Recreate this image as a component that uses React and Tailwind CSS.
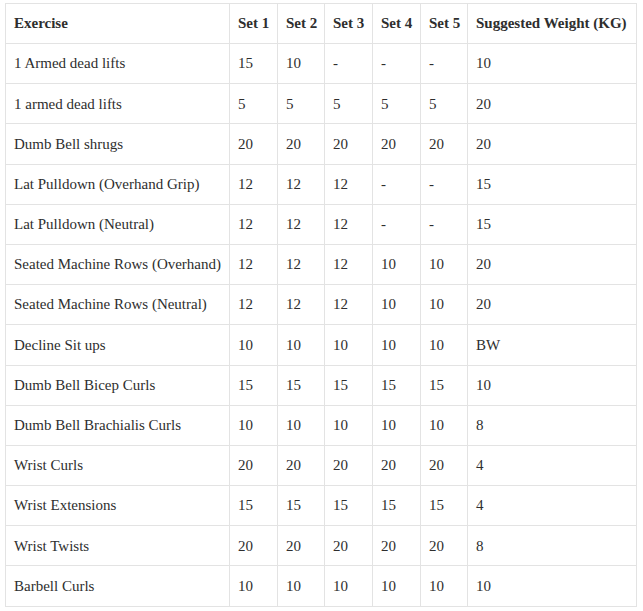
import React from 'react';

const rows = [
    ['1 Armed dead lifts', '15', '10', '-', '-', '-', '10'],
    ['1 armed dead lifts', '5', '5', '5', '5', '5', '20'],
    ['Dumb Bell shrugs', '20', '20', '20', '20', '20', '20'],
    ['Lat Pulldown (Overhand Grip)', '12', '12', '12', '-', '-', '15'],
    ['Lat Pulldown (Neutral)', '12', '12', '12', '-', '-', '15'],
    ['Seated Machine Rows (Overhand)', '12', '12', '12', '10', '10', '20'],
    ['Seated Machine Rows (Neutral)', '12', '12', '12', '10', '10', '20'],
    ['Decline Sit ups', '10', '10', '10', '10', '10', 'BW'],
    ['Dumb Bell Bicep Curls', '15', '15', '15', '15', '15', '10'],
    ['Dumb Bell Brachialis Curls', '10', '10', '10', '10', '10', '8'],
    ['Wrist Curls', '20', '20', '20', '20', '20', '4'],
    ['Wrist Extensions', '15', '15', '15', '15', '15', '4'],
    ['Wrist Twists', '20', '20', '20', '20', '20', '8'],
    ['Barbell Curls', '10', '10', '10', '10', '10', '10'],
];

const headers = ['Exercise', 'Set 1', 'Set 2', 'Set 3', 'Set 4', 'Set 5', 'Suggested Weight (KG)'];
const widths = ['w-[224px]', 'w-[48px]', 'w-[47px]', 'w-[48px]', 'w-[48px]', 'w-[47px]', 'w-[169px]'];

const App = () => {
    return (
        <div className="bg-white min-h-[611px] pl-[5px] pt-[3px] font-['Liberation_Serif',serif] text-[#2e2e2e]">
            <table className="border-collapse table-fixed w-[631px] text-[15px]">
                <colgroup>
                    {widths.map((w, i) => (
                        <col key={i} className={w} />
                    ))}
                </colgroup>
                <thead>
                    <tr className="h-[40px]">
                        {headers.map(h => (
                            <th key={h} className="border border-[#e3e3e3] px-2 text-left font-bold whitespace-nowrap">
                                {h}
                            </th>
                        ))}
                    </tr>
                </thead>
                <tbody>
                    {rows.map((row, r) => (
                        <tr key={r} className="h-[40.2px]">
                            {row.map((cell, c) => (
                                <td key={c} className="border border-[#e3e3e3] px-2 whitespace-nowrap">
                                    {cell}
                                </td>
                            ))}
                        </tr>
                    ))}
                </tbody>
            </table>
        </div>
    );
};

export default App;
